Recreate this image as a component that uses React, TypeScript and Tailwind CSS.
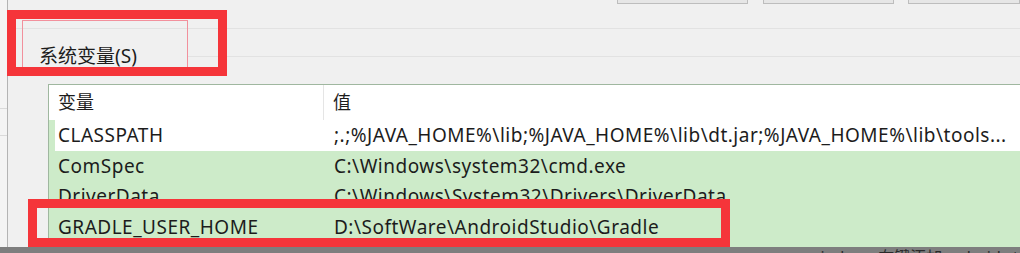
import React from "react";

const FONT = { fontFamily: '"Noto Sans", "Noto Sans CJK SC", sans-serif' };

const rows = [
  {
    name: "CLASSPATH",
    value: ";.;%JAVA_HOME%\\lib;%JAVA_HOME%\\lib\\dt.jar;%JAVA_HOME%\\lib\\tools...",
    hovered: true,
  },
  { name: "ComSpec", value: "C:\\Windows\\system32\\cmd.exe" },
  { name: "DriverData", value: "C:\\Windows\\System32\\Drivers\\DriverData" },
  { name: "GRADLE_USER_HOME", value: "D:\\SoftWare\\AndroidStudio\\Gradle" },
];

export default function App() {
  return (
    <div className="relative flex h-[253px] w-[1020px] flex-col overflow-hidden bg-[#f0f0f0] text-[#1c1c1c]" style={FONT}>
      <div className="flex h-[247px] overflow-hidden">
        {/* left edge of the dialog */}
        <div className="flex w-[8px] shrink-0 flex-col border-r border-[#b4b4b4] bg-[#f4f4f4]">
          <div className="mt-[108px] h-px bg-[#dadada]" />
          <div className="mt-[26px] h-px bg-[#dadada]" />
        </div>

        <div className="flex min-w-0 flex-1 flex-col">
          {/* bottom edge of the buttons above */}
          <div className="flex h-[4px] shrink-0">
            <div className="ml-[609px] w-[140px] border-x border-b border-[#bdbdbd] bg-[#e6e6e6]" />
            <div className="ml-[15px] w-[140px] border-x border-b border-[#bdbdbd] bg-[#e6e6e6]" />
            <div className="ml-[14px] w-[120px] border-x border-b border-[#bdbdbd] bg-[#e6e6e6]" />
          </div>
          <div className="mt-[24px] h-px shrink-0 bg-[#e2e2e2]" />

          {/* group label */}
          <div className="flex h-[55px] shrink-0 items-center">
            <div className="w-[180px] shrink-0 pl-[31px] text-[19px] leading-none">系统变量(S)</div>
            <div className="h-px flex-1 bg-[#e2e2e2]" />
          </div>

          {/* list view */}
          <div className="ml-[40px] flex-1 border-l border-t border-[#9fb79f] bg-[#cdebc9]">
            <div className="flex h-[35px] bg-white text-[18px]">
              <div className="flex w-[275px] items-center border-r border-[#e5e5e5] pl-[9px]">变量</div>
              <div className="flex flex-1 items-center pl-[9px]">值</div>
            </div>
            {rows.map((row) => (
              <div
                key={row.name}
                className={
                  row.hovered
                    ? "ml-[6px] flex h-[30.5px] items-center bg-white text-[19px] tracking-[0.5px] whitespace-nowrap"
                    : "ml-[6px] flex h-[30.5px] items-center text-[19px] tracking-[0.5px] whitespace-nowrap"
                }
              >
                <div className="w-[269px] shrink-0 pl-[3px]">{row.name}</div>
                <div className="min-w-0 flex-1 overflow-hidden pl-[10px]">{row.value}</div>
              </div>
            ))}
          </div>
        </div>
      </div>

      {/* strip of the video frame below */}
      <div className="h-[6px] shrink-0 overflow-hidden bg-[#7e7e7e]">
        <div className="ml-[808px] mt-[1px] whitespace-nowrap text-[16px] leading-[18px] text-[#2a2a2a]">
          windows 右键添加android studio
        </div>
      </div>

      {/* annotation marks drawn over the screenshot */}
      <div className="pointer-events-none absolute left-[22px] top-[20px] h-[48px] w-[166px] border border-[#f2909c]" />
      <div className="pointer-events-none absolute left-[7px] top-[10px] h-[66px] w-[220px] border-[9px] border-[#f5353a]" />
      <div className="pointer-events-none absolute left-[28px] top-[199px] h-[48px] w-[702px] border-[9px] border-[#f5353a]" />
    </div>
  );
}
